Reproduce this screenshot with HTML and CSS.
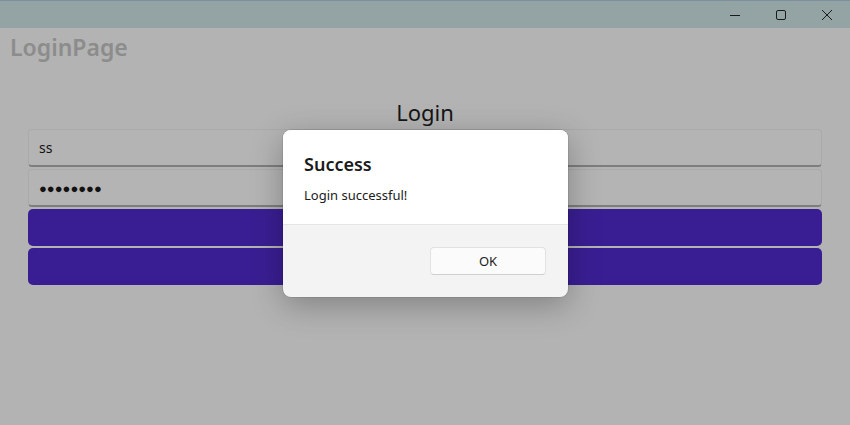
FILE: index.html
```html
<!DOCTYPE html>
<html lang="en">

<head>
    <meta charset="UTF-8">
    <meta name="viewport" content="width=device-width, initial-scale=1.0">
    <title>LoginPage</title>
    <link rel="stylesheet" href="styles.css">
</head>

<body>
    <div class="window">
        <div class="titlebar">
            <div class="caption-buttons">
                <span class="caption-btn">
                    <svg width="12" height="12" viewBox="0 0 12 12"><path d="M1 6.5h10" stroke="#1a1a1a" stroke-width="1"/></svg>
                </span>
                <span class="caption-btn">
                    <svg width="12" height="12" viewBox="0 0 12 12"><rect x="1.5" y="1.5" width="9" height="9" rx="1.5" fill="none" stroke="#1a1a1a" stroke-width="1"/></svg>
                </span>
                <span class="caption-btn">
                    <svg width="12" height="12" viewBox="0 0 12 12"><path d="M1 1l10 10M11 1L1 11" stroke="#1a1a1a" stroke-width="1"/></svg>
                </span>
            </div>
        </div>

        <div class="content">
            <div class="app-title">LoginPage</div>
            <h1 class="heading">Login</h1>
            <div class="form">
                <div class="field">ss</div>
                <div class="field password">&#9679;&#9679;&#9679;&#9679;&#9679;&#9679;&#9679;&#9679;</div>
                <div class="btn"></div>
                <div class="btn"></div>
            </div>
        </div>

        <div class="dialog">
            <div class="dialog-body">
                <h2>Success</h2>
                <p>Login successful!</p>
            </div>
            <div class="dialog-footer">
                <button>OK</button>
            </div>
        </div>
    </div>
</body>

</html>
```

FILE: styles.css
```css
*{
    margin: 0;
    padding: 0;
    box-sizing: border-box;
    font-family: "Noto Sans", "Open Sans", sans-serif;
}
:root{
    --dim-bg:#b3b3b3;
    --purple:#391e93;
}
body{
    width: 850px;
    height: 425px;
    overflow: hidden;
    background-color: var(--dim-bg);
}
.window{
    position: relative;
    width: 850px;
    height: 425px;
    display: flex;
    flex-direction: column;
}
.titlebar{
    height: 28px;
    background-color: #94a3a3;
    border-top: 1px solid #7e8fa0;
    display: flex;
    justify-content: flex-end;
}
.caption-buttons{
    display: flex;
}
.caption-btn{
    width: 46px;
    height: 27px;
    display: flex;
    align-items: center;
    justify-content: center;
}
.content{
    flex: 1;
    padding: 0 28px;
    display: flex;
    flex-direction: column;
}
.app-title{
    margin: 4px 0 0 -18px;
    font-size: 23px;
    font-weight: 600;
    color: #8c8c8c;
    height: 30px;
    line-height: 30px;
}
.heading{
    margin-top: 36px;
    text-align: center;
    font-size: 22px;
    font-weight: 400;
    color: #151515;
    height: 28px;
    line-height: 28px;
}
.form{
    margin-top: 3px;
    display: flex;
    flex-direction: column;
    gap: 2px;
}
.field{
    height: 38px;
    padding: 0 10px;
    font-size: 14px;
    line-height: 36px;
    color: #111;
    background-color: #b4b4b4;
    border: 1px solid #aaaaaa;
    border-bottom: 2px solid #7d7d7d;
    border-radius: 4px;
}
.password{
    font-size: 13px;
}
.btn{
    height: 37px;
    background-color: var(--purple);
    border-radius: 5px;
}
.dialog{
    position: absolute;
    left: 283px;
    top: 130px;
    width: 285px;
    height: 167px;
    background-color: #f3f3f3;
    border-radius: 8px;
    overflow: hidden;
    box-shadow: 0 8px 32px rgba(0,0,0,0.28), 0 0 0 1px rgba(0,0,0,0.08);
    display: flex;
    flex-direction: column;
}
.dialog-body{
    height: 95px;
    background-color: #ffffff;
    border-bottom: 1px solid #e5e5e5;
    padding: 22px 21px 0 21px;
}
.dialog-body h2{
    font-size: 18px;
    font-weight: 600;
    color: #1b1b1b;
    line-height: 24px;
}
.dialog-body p{
    margin-top: 10px;
    font-size: 13px;
    color: #1b1b1b;
    line-height: 18px;
}
.dialog-footer{
    flex: 1;
    display: flex;
    justify-content: flex-end;
    align-items: flex-start;
    padding: 22px 22px 0 0;
}
.dialog-footer button{
    width: 116px;
    height: 28px;
    font-size: 13px;
    color: #1b1b1b;
    background-color: #fbfbfb;
    border: 1px solid #e1e1e1;
    border-bottom-color: #cfcfcf;
    border-radius: 4px;
}
```
